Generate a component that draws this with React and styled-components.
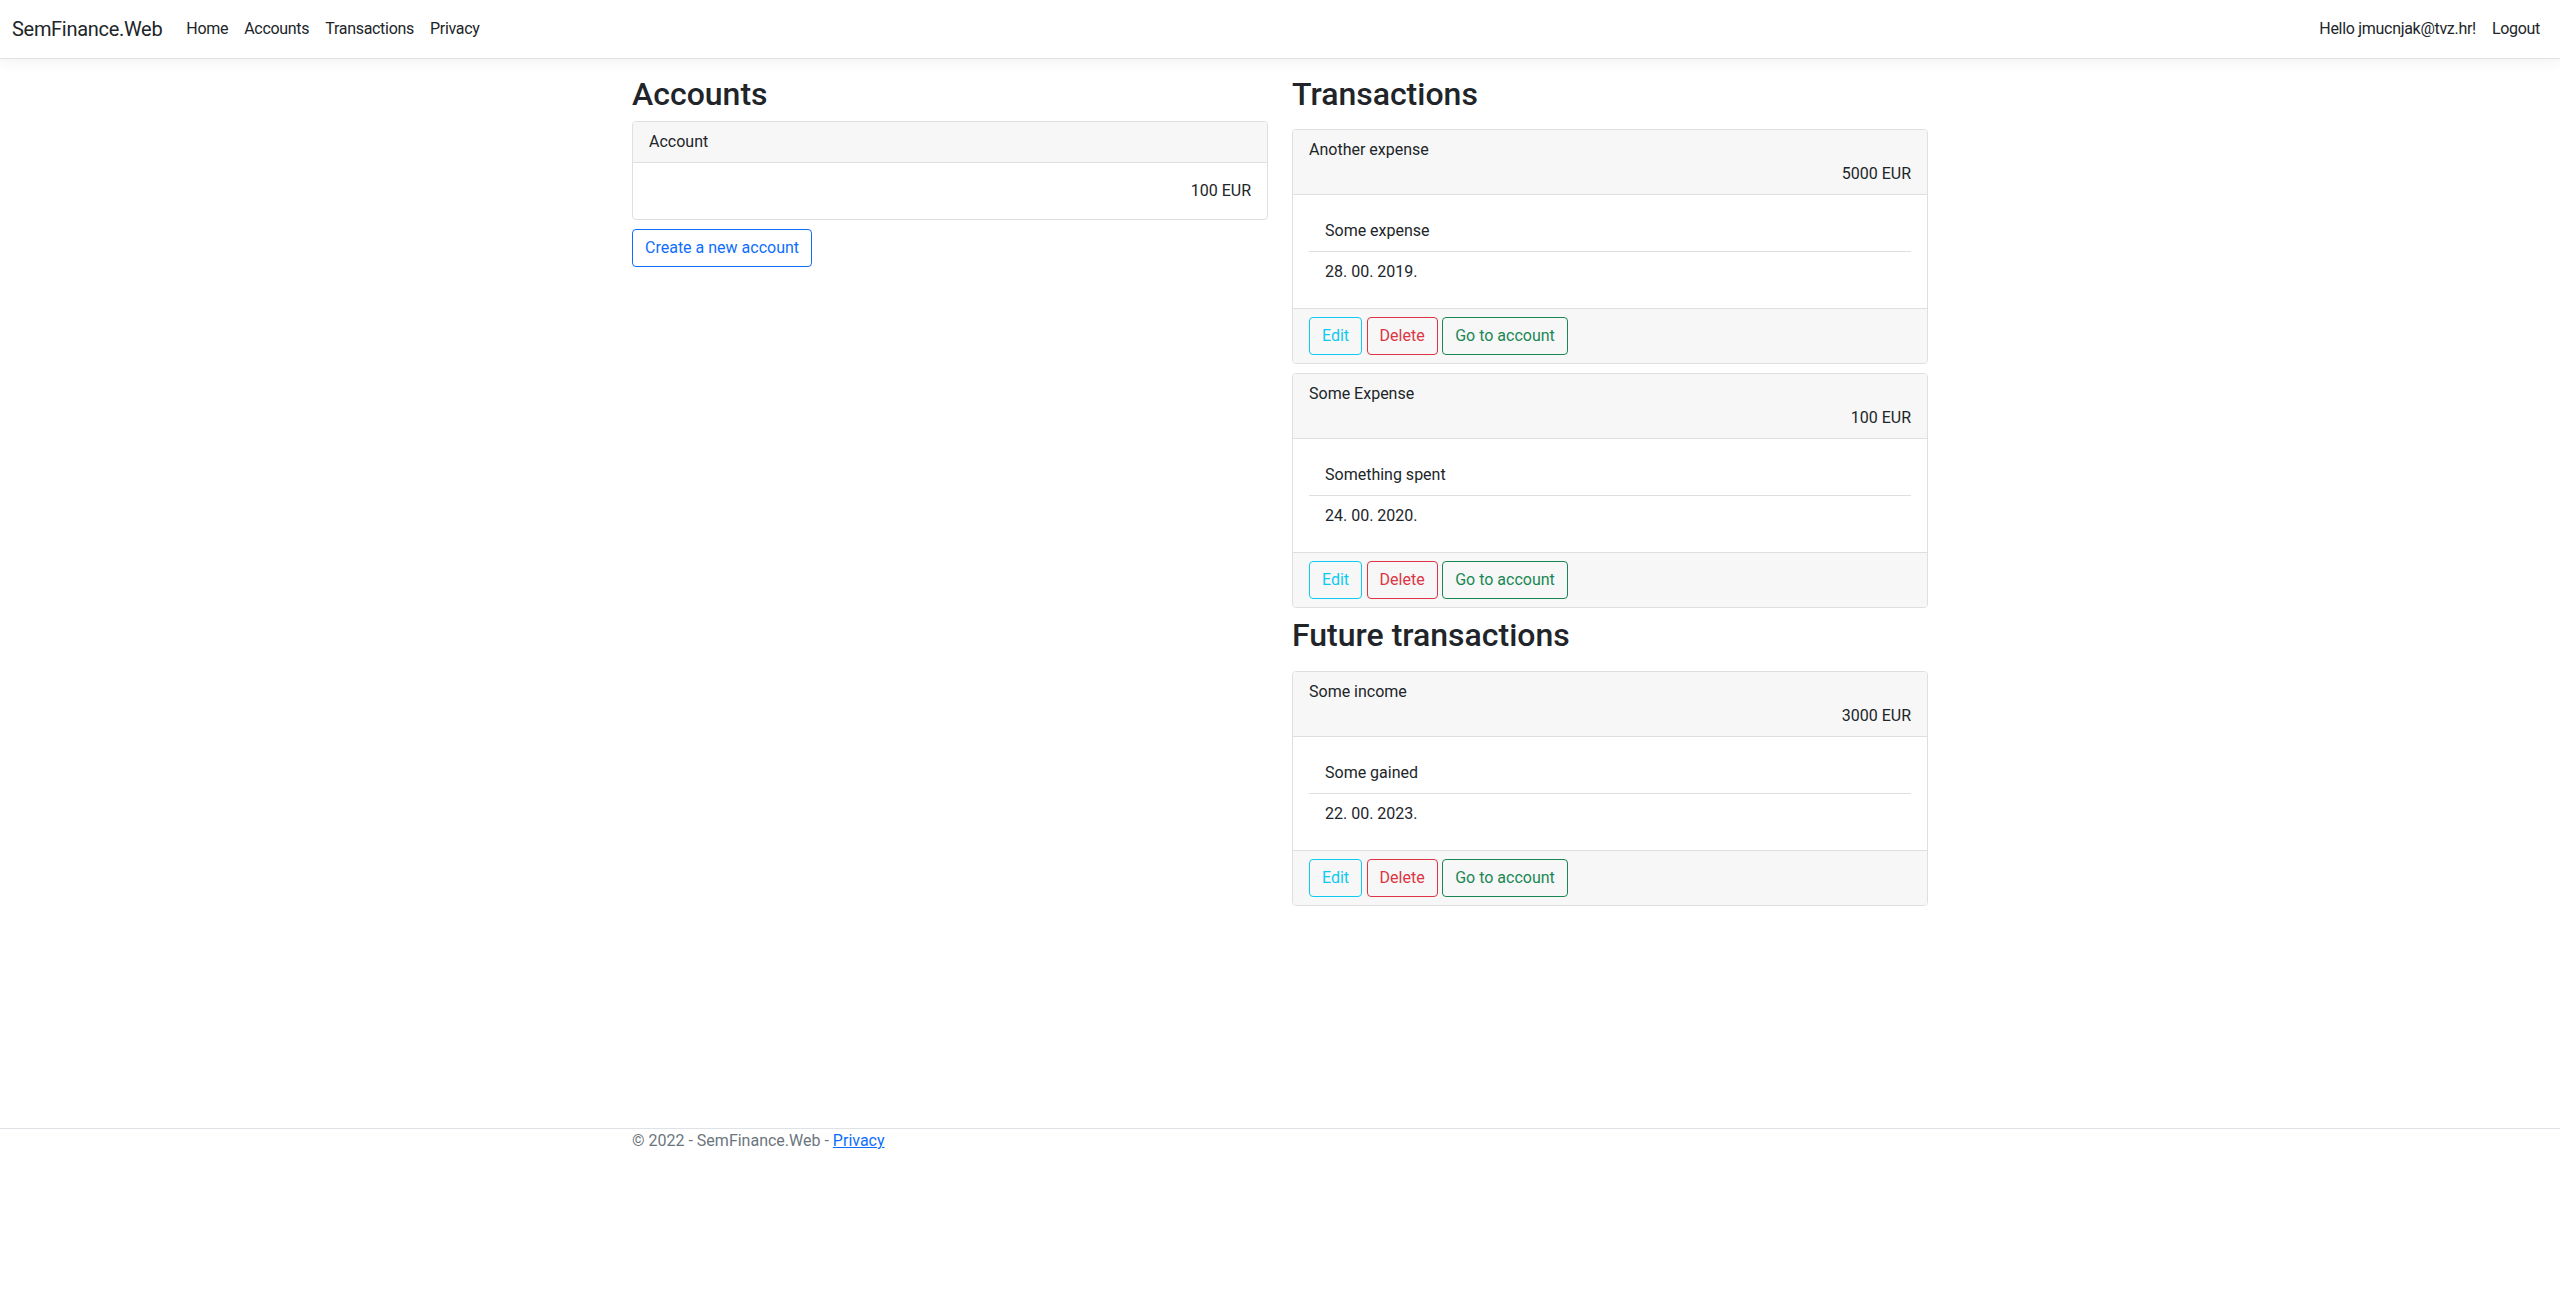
import React from "react";
import styled, { createGlobalStyle } from "styled-components";

const GlobalStyle = createGlobalStyle`
  html, body {
    margin: 0;
    padding: 0;
    background: #fff;
  }
  body {
    font-family: "Segoe UI", Roboto, "Liberation Sans", sans-serif;
    font-size: 16px;
    line-height: 1.5;
    color: #212529;
  }
  * {
    box-sizing: border-box;
  }
`;

const Navbar = styled.nav`
  display: flex;
  align-items: center;
  justify-content: space-between;
  padding: 9px 12px;
  background: #fff;
  border-bottom: 1px solid #dee2e6;
  box-shadow: 0 4px 12px rgba(0, 0, 0, 0.05);
  margin-bottom: 16px;
`;
const NavLeft = styled.div`
  display: flex;
  align-items: center;
`;
const Brand = styled.a`
  font-size: 20px;
  line-height: 30px;
  padding: 5px 0;
  margin-right: 16px;
  color: #212529;
  text-decoration: none;
  letter-spacing: -0.3px;
`;
const NavList = styled.div`
  display: flex;
  align-items: center;
`;
const NavLink = styled.a`
  padding: 8px;
  color: #212529;
  text-decoration: none;
  line-height: 24px;
  letter-spacing: -0.3px;
`;

const Main = styled.main`
  width: 1320px;
  margin: 0 auto;
  padding: 0 12px;
  min-height: 1053px;
`;
const Row = styled.div`
  display: grid;
  grid-template-columns: 1fr 1fr;
  column-gap: 24px;
  align-items: start;
`;
const Column = styled.section`
  display: flex;
  flex-direction: column;
  align-items: flex-start;
`;
const Title = styled.h2`
  margin: 0 0 8px;
  font-size: 32px;
  font-weight: 500;
  line-height: 1.2;
`;
const CardStack = styled.div`
  display: flex;
  flex-direction: column;
  gap: 9px;
  padding: 8px 0;
  width: 100%;
`;
const Card = styled.div`
  width: 100%;
  border: 1px solid #dfdfdf;
  border-radius: 4px;
  background: #fff;
  overflow: hidden;
`;
const CardHeader = styled.div`
  padding: 8px 16px;
  background: #f7f7f7;
  border-bottom: 1px solid #dfdfdf;
`;
const CardBody = styled.div`
  padding: 16px;
  text-align: ${(p) => (p.$right ? "right" : "left")};
`;
const Amount = styled.div`
  text-align: right;
`;
const ItemList = styled.div`
  display: flex;
  flex-direction: column;
`;
const Item = styled.div`
  padding: 8px 16px;
  & + & {
    border-top: 1px solid #dfdfdf;
  }
`;
const CardFooter = styled.div`
  display: flex;
  gap: 4.5px;
  padding: 8px 16px;
  background: #f7f7f7;
  border-top: 1px solid #dfdfdf;
`;

const colors = {
  primary: "#0d6efd",
  info: "#0dcaf0",
  danger: "#dc3545",
  success: "#198754",
};

const Button = styled.a`
  display: inline-block;
  padding: 6px 12px;
  font-size: 16px;
  line-height: 24px;
  border-radius: 4px;
  border: 1px solid ${(p) => colors[p.$variant]};
  color: ${(p) => colors[p.$variant]};
  background: transparent;
  text-decoration: none;
  cursor: pointer;
  margin-top: ${(p) => (p.$spaced ? "9px" : "0")};
`;

const Footer = styled.footer`
  border-top: 1px solid #dee2e6;
`;
const FooterInner = styled.div`
  width: 1320px;
  margin: 0 auto;
  padding: 0 12px;
  color: #6c757d;
  line-height: 24px;
`;
const FooterLink = styled.a`
  color: #0d6efd;
  text-decoration: underline;
`;

const transactions = [
  { title: "Another expense", amount: "5000 EUR", note: "Some expense", date: "28. 00. 2019." },
  { title: "Some Expense", amount: "100 EUR", note: "Something spent", date: "24. 00. 2020." },
];

const future = [
  { title: "Some income", amount: "3000 EUR", note: "Some gained", date: "22. 00. 2023." },
];

function TransactionCard({ t }) {
  return (
    <Card>
      <CardHeader>
        <div>{t.title}</div>
        <Amount>{t.amount}</Amount>
      </CardHeader>
      <CardBody>
        <ItemList>
          <Item>{t.note}</Item>
          <Item>{t.date}</Item>
        </ItemList>
      </CardBody>
      <CardFooter>
        <Button $variant="info">Edit</Button>
        <Button $variant="danger">Delete</Button>
        <Button $variant="success">Go to account</Button>
      </CardFooter>
    </Card>
  );
}

export default function App() {
  return (
    <React.Fragment>
      <GlobalStyle />
      <Navbar>
        <NavLeft>
          <Brand>SemFinance.Web</Brand>
          <NavList>
            <NavLink>Home</NavLink>
            <NavLink>Accounts</NavLink>
            <NavLink>Transactions</NavLink>
            <NavLink>Privacy</NavLink>
          </NavList>
        </NavLeft>
        <NavList>
          <NavLink>Hello jmucnjak@tvz.hr!</NavLink>
          <NavLink>Logout</NavLink>
        </NavList>
      </Navbar>
      <Main>
        <Row>
          <Column>
            <Title>Accounts</Title>
            <Card>
              <CardHeader>Account</CardHeader>
              <CardBody $right>100 EUR</CardBody>
            </Card>
            <Button $variant="primary" $spaced>
              Create a new account
            </Button>
          </Column>
          <Column>
            <Title>Transactions</Title>
            <CardStack>
              {transactions.map((t) => (
                <TransactionCard key={t.title} t={t} />
              ))}
            </CardStack>
            <Title>Future transactions</Title>
            <CardStack>
              {future.map((t) => (
                <TransactionCard key={t.title} t={t} />
              ))}
            </CardStack>
          </Column>
        </Row>
      </Main>
      <Footer>
        <FooterInner>
          © 2022 - SemFinance.Web - <FooterLink>Privacy</FooterLink>
        </FooterInner>
      </Footer>
    </React.Fragment>
  );
}
